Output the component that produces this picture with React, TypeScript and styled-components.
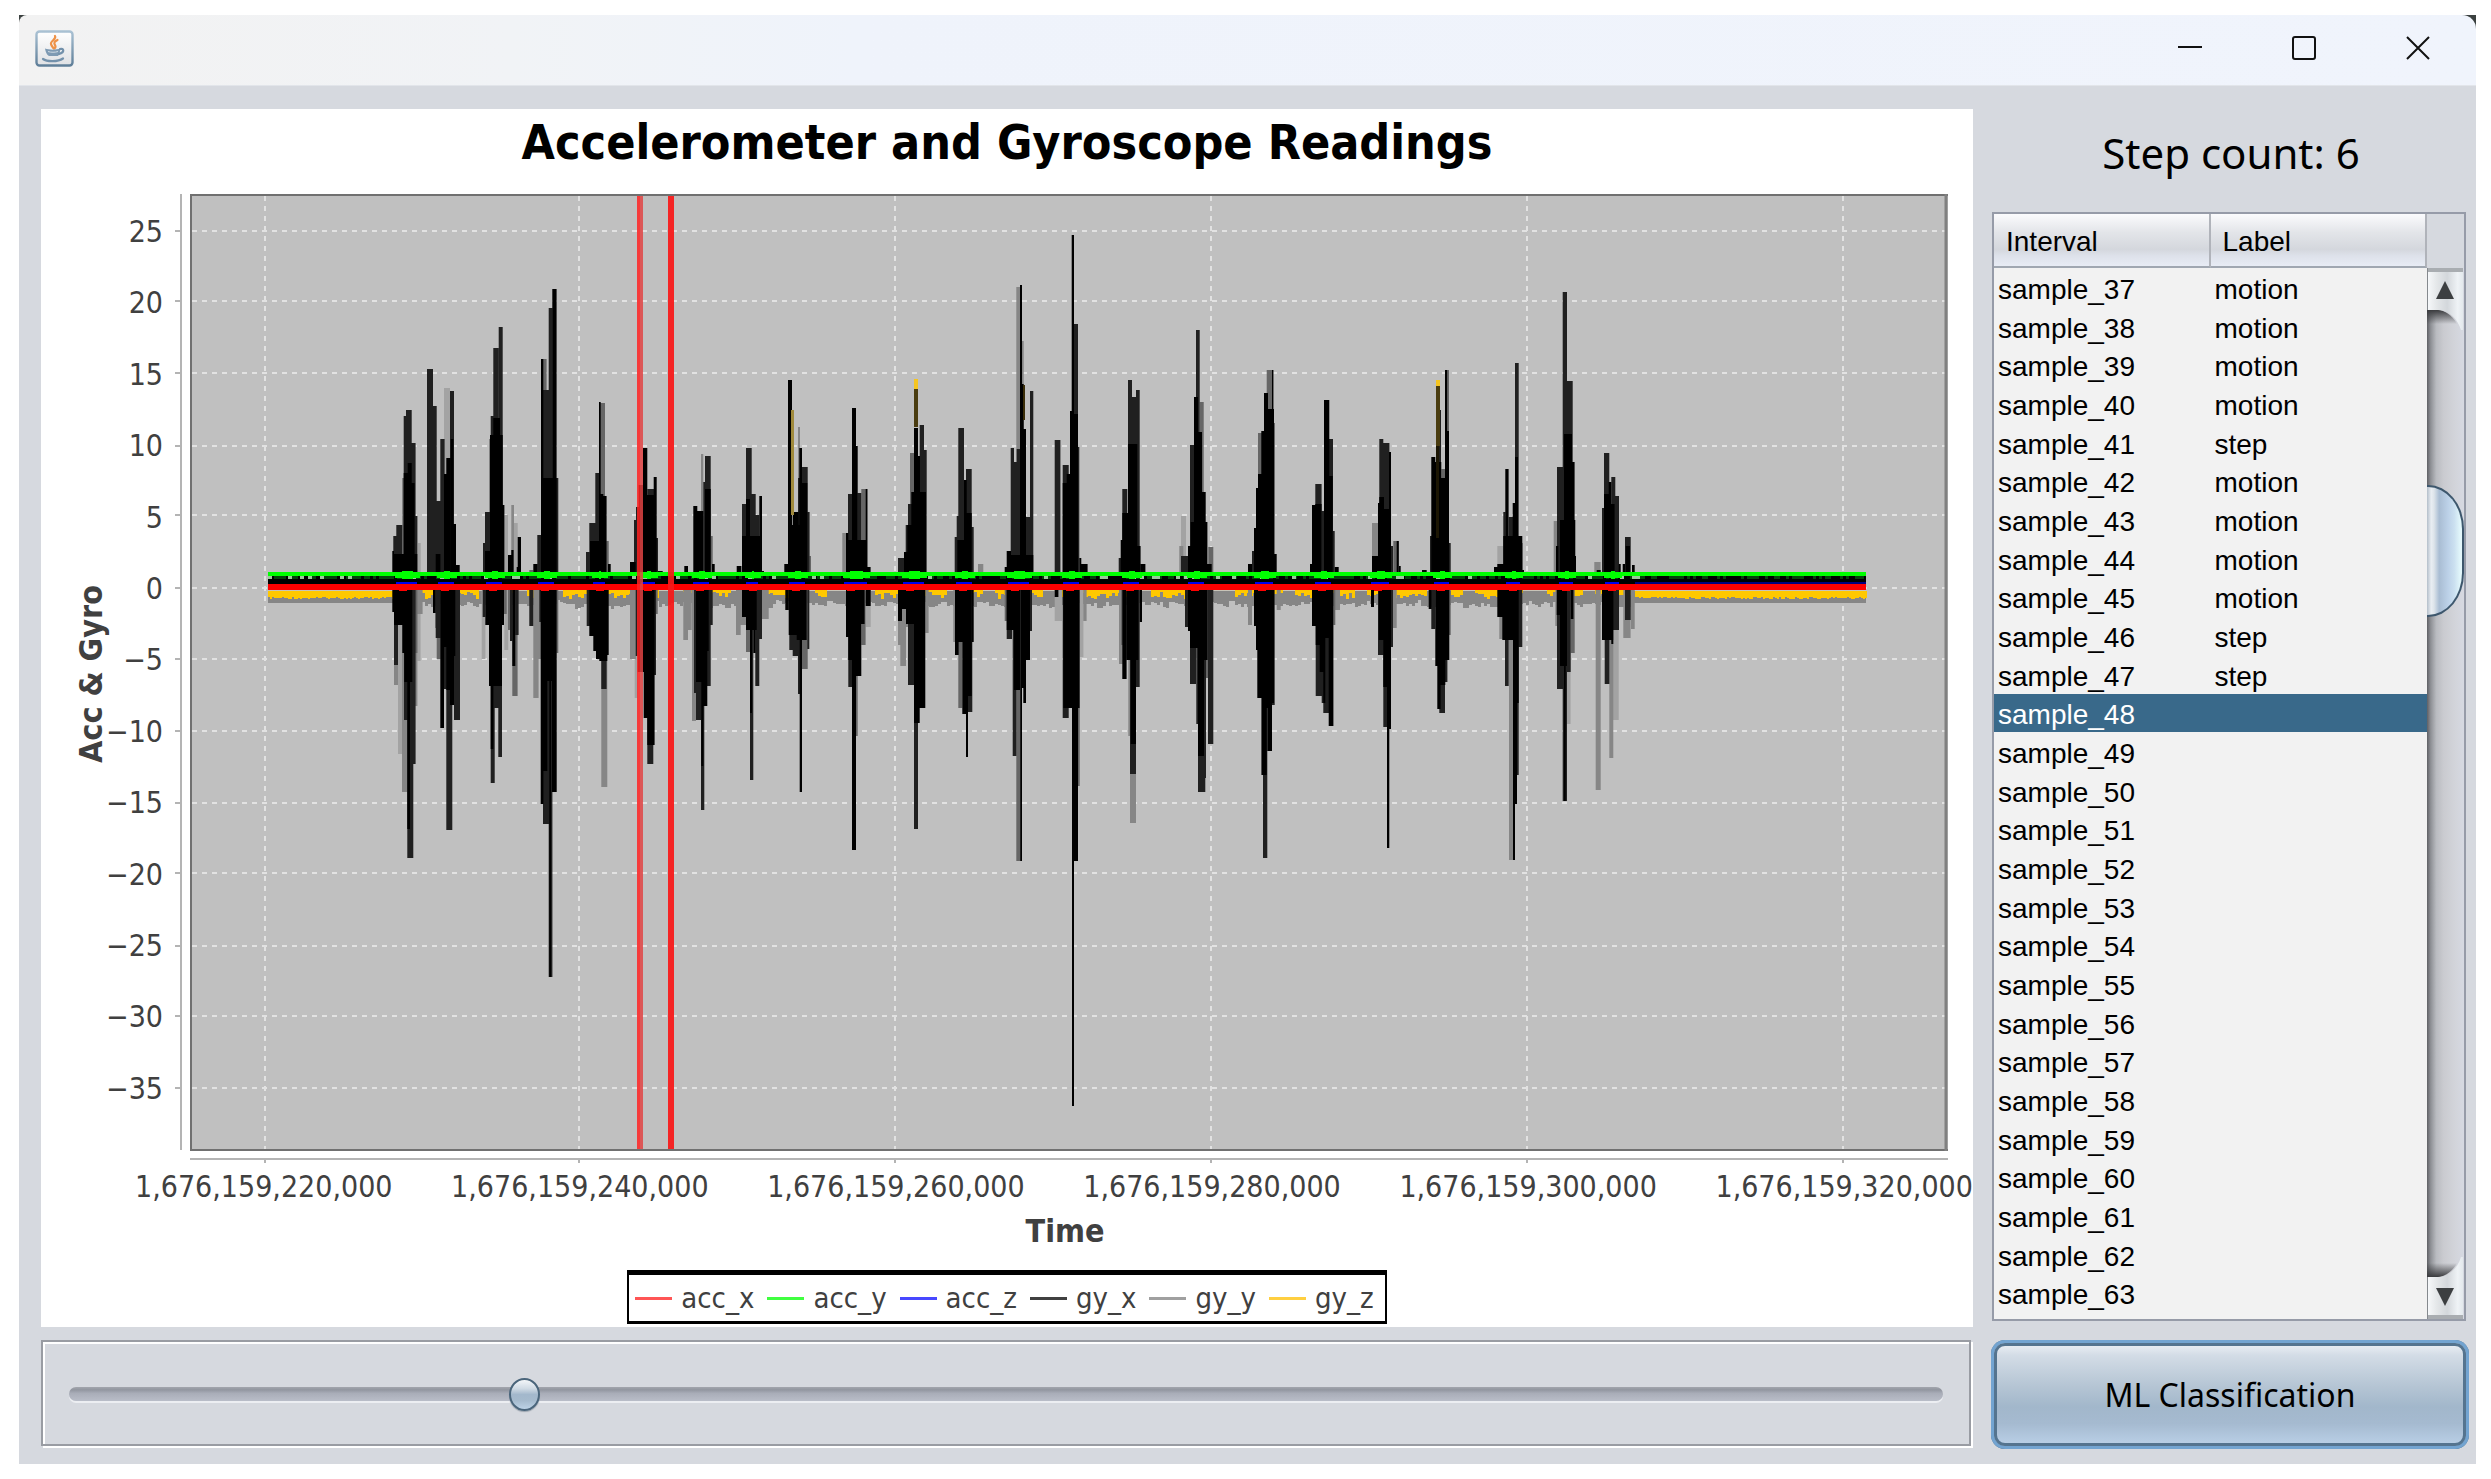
import React, { useState } from 'react';
import styled, { createGlobalStyle } from 'styled-components';

const chartFont = '"DejaVu Sans Condensed", "DejaVu Sans", sans-serif';
const labelFont = '"Noto Sans", "Open Sans", sans-serif';
const tableFont = '"Liberation Sans", Arial, sans-serif';

const GlobalStyle = createGlobalStyle`
  * { box-sizing: border-box; }
  body { margin: 0; background: #fff; color: #000; font-family: ${labelFont}; }
  button { font: inherit; color: inherit; padding: 0; border: 0; background: none; }
`;

/* ---------- window ---------- */

const Page = styled.div`
  display: flex;
  min-height: 100vh;
  padding: 15px;
  padding-left: 19px;
`;

const Window = styled.main`
  display: flex;
  flex: 1;
  flex-direction: column;
  min-width: 0;
  background: linear-gradient(#3b4140 30px, #d6d9df 30px);
`;

const TitleBar = styled.header`
  display: flex;
  align-items: center;
  justify-content: space-between;
  height: 71px;
  padding: 0 32px 4px 16px;
  border-bottom: 1px solid #e2e5ea;
  border-radius: 8px 14px 0 0;
  background: linear-gradient(90deg, #f2f2f2, #f1f3f6 20%, #eff3fb 34%, #f0f4fc);
`;

const WindowButtons = styled.div`
  display: flex;
  gap: 62px;
`;

const WindowButton = styled.button`
  display: grid;
  place-items: center;
  width: 52px;
  height: 40px;

  svg { display: block; }
`;

const Content = styled.div`
  display: grid;
  flex: 1;
  grid-template-columns: minmax(0, 1fr) 478px;
  gap: 18px;
  padding: 23px 7px 15px 22px;
`;

const Column = styled.section`
  display: flex;
  flex-direction: column;
  min-width: 0;
`;

/* ---------- chart ---------- */

const ChartPanel = styled.figure`
  display: flex;
  flex: 1;
  flex-direction: column;
  margin: 0 0 13px;
  background: #fff;
  color: #404040;
  font: 30px/36px ${chartFont};
`;

const ChartTitle = styled.h1`
  margin: 0;
  padding-bottom: 18px;
  color: #000;
  font: bold 48px/67px ${chartFont};
  text-align: center;
`;

const PlotRow = styled.div`
  display: grid;
  flex: 1;
  grid-template-columns: 72px 50px minmax(0, 1fr);
  padding-right: 25px;
`;

const ValueAxisLabel = styled.div`
  display: flex;
  align-items: center;
  justify-content: center;
  padding-bottom: 16px;
  padding-left: 28px;

  span {
    font: bold 32px/40px ${chartFont};
    writing-mode: vertical-rl;
    transform: rotate(180deg);
  }
`;

const ValueTicks = styled.ol`
  display: flex;
  flex-direction: column;
  align-items: flex-end;
  justify-content: space-between;
  margin: 0;
  padding: 20px 0 63px;
  list-style: none;
`;

const Plot = styled.svg`
  display: block;
  width: 100%;
  height: 100%;
  min-height: 0;
`;

const TimeTicks = styled.ol`
  display: flex;
  justify-content: space-between;
  margin: 0;
  padding: 0 0 0 94px;
  line-height: 34px;
  list-style: none;
`;

const TimeAxisLabel = styled.div`
  padding: 6px 0 18px 116px;
  font: bold 32px/42px ${chartFont};
  text-align: center;
`;

const Legend = styled.ul`
  display: flex;
  align-items: center;
  align-self: center;
  gap: 13px;
  height: 54px;
  margin: 0 0 3px;
  padding: 0 11px 0 6px;
  border: solid #000;
  border-width: 5px 2px 3px;
  font-size: 29px;
  list-style: none;
`;

const LegendItem = styled.li<{ $color: string }>`
  display: flex;
  align-items: center;
  gap: 9px;

  &::before {
    width: 37px;
    height: 3px;
    background: ${(p) => p.$color};
    content: '';
  }
`;

/* ---------- position slider ---------- */

const SliderPanel = styled.div`
  display: flex;
  align-items: center;
  height: 106px;
  margin: 0 2px 3px 0;
  padding: 1px 26px 0;
  border: 2px solid #999ca3;
  box-shadow: inset 2px 2px 0 #fff, 2px 2px 0 #fff;
`;

const Slider = styled.input`
  width: 100%;
  height: 34px;
  margin: 0;
  appearance: none;
  background: none;

  &::-webkit-slider-runnable-track {
    height: 14px;
    border-radius: 7px;
    background: linear-gradient(#a3a6ad, #9296a0 20%, #a9adb8 45%, #b9bdc8);
    box-shadow: 0 2px 0 #eceef2;
  }

  &::-webkit-slider-thumb {
    width: 31px;
    height: 33px;
    margin-top: -9px;
    border: 2px solid #4a657b;
    border-radius: 50%;
    appearance: none;
    background: linear-gradient(#f3f6f9, #cfdae4 30%, #a3b8cc 50%, #a5bacd 70%, #bcd2e6);
    box-shadow: 0 1px 1px #9aa3ae;
  }
`;

/* ---------- interval table ---------- */

const StepCount = styled.output`
  display: block;
  height: 103px;
  padding-right: 6px;
  padding-left: 8px;
  font-size: 42px;
  line-height: 88px;
  text-align: center;
`;

const TablePane = styled.div`
  display: grid;
  flex: 1;
  grid-template-columns: minmax(0, 1fr) 37px;
  margin: 0 3px 19px 1px;
  border: 2px solid #969ba8;
`;

const TableViewport = styled.div`
  background: #f2f2f2;
`;

const Table = styled.table`
  width: 100%;
  border-collapse: separate;
  border-spacing: 0;
  font: 28px/36px ${tableFont};
  table-layout: fixed;
`;

const HeadCell = styled.th`
  height: 54px;
  padding: 4px 12px 0;
  border-right: 2px solid #b0b3ba;
  border-bottom: 2px solid #a0a7b1;
  background: linear-gradient(#fbfbfd, #e3e5e9 35%, #d4d7dd 68%, #dde1ea 80%, #e8ecf5);
  font-weight: normal;
  text-align: left;
`;

const Row = styled.tr<{ $selected: boolean }>`
  height: 39px;
  background: ${(p) => (p.$selected ? '#39698a' : 'transparent')};
  color: ${(p) => (p.$selected ? '#fff' : '#000')};

  &:nth-child(3n) { height: 38px; }
`;

const Cell = styled.td`
  padding: 4px 4px 0;
  line-height: 34px;
`;

const ScrollColumn = styled.div`
  display: flex;
  flex-direction: column;
  padding-top: 54px;
`;

const ScrollBar = styled.div`
  display: flex;
  flex: 1;
  flex-direction: column;
  background: linear-gradient(90deg, #5f6065, #8e9095 10%, #b9bbc0 25%, #cacbd0 45%, #d2d4da 75%, #d6d9e2);
`;

const ScrollButton = styled.button`
  display: block;
  height: 62px;

  svg { display: block; }
`;

const ScrollGap = styled.div<{ $grow: number }>`
  flex: ${(p) => p.$grow} 0 0;
`;

const ScrollThumb = styled.div`
  height: 132px;
  border: 2px solid #3d576d;
  border-left: 0;
  border-radius: 0 36px 36px 0 / 0 44px 44px 0;
  background: linear-gradient(90deg, #b4bfca, #e9eef3 12%, #dde4ea 20%, #a9bdd3 35%, #bcd1e8 60%, #cbe0f0 78%, #e2f7fb 95%);
`;

const ClassifyButton = styled.button`
  height: 109px;
  border: 3px solid #55748f;
  border-bottom-color: #3f5b73;
  border-radius: 14px;
  outline: 3px solid #73a4d1;
  outline-offset: -3px;
  background: linear-gradient(#eef1f6, #d3dce6 12%, #b5c5d4 42%, #a2b7cb 62%, #a5bad0 78%, #bbd1e8);
  box-shadow: inset 0 0 0 3px #55748f;
  font-size: 32px;
`;

/* ---------- data ---------- */

const valueTicks = ['25', '20', '15', '10', '5', '0', '−5', '−10', '−15', '−20', '−25', '−30', '−35'];
const timeTicks = ['220', '240', '260', '280', '300', '320'].map((k) => `1,676,159,${k},000`);

const series = [
  { name: 'acc_x', color: '#ff5555' },
  { name: 'acc_y', color: '#40ff40' },
  { name: 'acc_z', color: '#4848ff' },
  { name: 'gy_x', color: '#404040' },
  { name: 'gy_y', color: '#a0a0a0' },
  { name: 'gy_z', color: '#ffcf40' },
];

const labels: Record<number, string> = {
  37: 'motion', 38: 'motion', 39: 'motion', 40: 'motion', 41: 'step', 42: 'motion',
  43: 'motion', 44: 'motion', 45: 'motion', 46: 'step', 47: 'step',
};
const samples = Array.from({ length: 27 }, (_, i) => ({
  id: 37 + i,
  name: `sample_${37 + i}`,
  label: labels[37 + i] ?? '',
}));

/* Each bar is [left, right, tip, shade]; it runs from the recording's base line to its tip. */
type Bar = [number, number, number, number];
type Recording = { x: number; scaleY: number; base: number; bars: Bar[] };

const recordings: Recording[] = [
  {
    x: 370, scaleY: 1.912, base: 770,
    bars: [
      [67, 72, 710, 0], [70, 79, 680, 1], [79, 97, 660, 1], [97, 103, 570, 2], [101, 109, 451, 1], [108, 125, 440, 1],
      [113, 125, 542, 0], [124, 137, 503, 1], [124, 134, 580, 0], [101, 113, 560, 0], [134, 142, 643, 1], [144, 152, 695, 4],
      [67, 142, 715, 0], [67, 73, 826, 0], [72, 84, 927, 1], [72, 84, 965, 3], [84, 98, 1098, 4], [96, 112, 1170, 3],
      [72, 97, 850, 0], [97, 103, 905, 0], [102, 112, 1032, 1], [112, 130, 1297, 1], [112, 120, 1240, 0], [127, 137, 1117, 1],
      [134, 142, 1005, 3], [142, 152, 920, 4], [134, 142, 905, 2], [142, 158, 830, 3], [103, 127, 960, 0],
      [171, 189, 362, 1], [189, 200, 433, 1], [197, 212, 614, 1], [211, 224, 496, 1], [222, 240, 397, 4], [222, 230, 562, 0],
      [229, 242, 532, 0], [240, 252, 403, 1], [242, 250, 495, 0], [250, 258, 657, 0], [258, 269, 737, 0], [197, 211, 716, 0],
      [189, 197, 828, 0], [196, 203, 856, 2], [200, 212, 916, 2], [197, 212, 875, 1], [211, 222, 1048, 0], [222, 229, 973, 1],
      [222, 230, 893, 0], [229, 247, 1242, 1], [229, 240, 975, 0], [240, 252, 1003, 0], [252, 270, 1032, 1], [252, 256, 910, 0],
      [339, 346, 695, 1], [345, 362, 634, 1], [358, 365, 495, 2], [362, 372, 451, 1], [370, 386, 322, 1], [370, 390, 455, 0],
      [386, 398, 282, 1], [398, 403, 622, 0], [360, 398, 488, 0], [345, 362, 710, 0], [335, 346, 916, 4], [338, 346, 835, 1],
      [346, 357, 850, 0], [357, 366, 967, 0], [362, 374, 1153, 1], [362, 370, 1087, 0], [374, 386, 1010, 1], [366, 396, 967, 0],
      [385, 396, 1103, 1], [396, 402, 850, 0], [403, 415, 898, 4], [402, 410, 830, 2],
      [403, 414, 640, 4], [414, 425, 717, 0], [424, 432, 622, 3], [424, 431, 708, 0], [432, 443, 655, 4], [443, 453, 682, 0],
      [440, 450, 740, 0], [414, 420, 860, 2], [420, 427, 882, 1], [427, 443, 987, 2], [427, 436, 930, 0], [436, 446, 870, 1],
      [478, 490, 745, 2], [490, 503, 735, 0], [502, 514, 678, 1], [513, 520, 343, 0], [517, 530, 343, 2], [517, 537, 402, 1],
      [536, 548, 245, 1], [547, 560, 208, 0], [513, 560, 570, 0], [558, 565, 570, 1], [478, 490, 853, 1], [490, 506, 990, 3],
      [503, 514, 915, 3], [508, 514, 845, 1], [512, 520, 1193, 0], [519, 537, 1232, 1], [519, 532, 1130, 0], [536, 547, 1523, 1],
      [538, 543, 1523, 0], [546, 560, 1170, 0], [559, 565, 905, 2], [532, 560, 958, 0],
      [648, 660, 712, 1], [658, 678, 656, 1], [676, 688, 560, 1], [687, 692, 424, 0], [690, 705, 426, 2], [690, 700, 600, 0],
      [700, 710, 604, 0], [710, 716, 690, 2], [714, 722, 735, 0], [660, 710, 690, 0], [650, 660, 852, 1], [658, 672, 872, 0],
      [670, 680, 900, 0], [678, 688, 916, 0], [687, 693, 888, 0], [694, 712, 1160, 3], [694, 710, 973, 1], [688, 712, 920, 0],
      [710, 716, 908, 0],
      [780, 797, 730, 0], [792, 803, 650, 1], [798, 808, 626, 1], [806, 821, 583, 0], [819, 832, 512, 0], [832, 853, 590, 1],
      [832, 852, 603, 0], [851, 860, 567, 0], [858, 864, 685, 1], [864, 878, 748, 0], [780, 798, 915, 3], [794, 803, 990, 4],
      [797, 808, 910, 1], [803, 822, 940, 0], [821, 832, 1028, 0], [832, 850, 1117, 1], [832, 854, 1080, 0], [848, 858, 946, 1],
      [858, 863, 830, 2],
      [943, 954, 738, 0], [970, 982, 624, 0], [980, 1000, 632, 0], [993, 1000, 523, 3], [1000, 1008, 577, 1], [1005, 1022, 527, 1],
      [1005, 1022, 590, 0], [1022, 1028, 680, 2], [1026, 1034, 735, 0], [940, 954, 880, 3], [954, 965, 860, 3],
      [966, 978, 1035, 3], [972, 980, 980, 1], [978, 996, 1032, 1], [978, 994, 960, 0], [993, 1003, 1204, 1], [994, 1000, 1120, 0],
      [1000, 1012, 1005, 0], [1010, 1022, 967, 1], [1010, 1016, 900, 0], [1022, 1028, 850, 1],
      [1100, 1114, 738, 0], [1116, 1130, 620, 1], [1128, 1145, 512, 1], [1128, 1140, 610, 0], [1145, 1157, 600, 1],
      [1155, 1168, 640, 1], [1168, 1176, 604, 0], [1176, 1182, 748, 0], [1116, 1176, 680, 0], [1098, 1112, 870, 3],
      [1112, 1128, 850, 3], [1116, 1128, 835, 0], [1128, 1140, 902, 2], [1140, 1150, 1148, 1], [1140, 1146, 1020, 0],
      [1150, 1157, 905, 0], [1156, 1168, 967, 1], [1128, 1160, 860, 0], [1165, 1176, 878, 1], [1176, 1196, 840, 3],
      [1243, 1256, 735, 0], [1254, 1266, 383, 0], [1268, 1286, 634, 0], [1284, 1292, 570, 1], [1284, 1290, 473, 3],
      [1288, 1296, 513, 0], [1296, 1313, 548, 1], [1296, 1312, 580, 0], [1312, 1319, 634, 1], [1318, 1323, 718, 2],
      [1260, 1290, 660, 0], [1246, 1256, 822, 0], [1258, 1271, 898, 1], [1268, 1284, 910, 1], [1256, 1280, 870, 0],
      [1284, 1292, 983, 1], [1289, 1296, 1170, 0], [1296, 1313, 935, 2], [1280, 1310, 880, 0], [1312, 1318, 896, 1],
    ],
  },
  {
    x: 820, scaleY: 1.668, base: 670,
    bars: [
      [67, 78, 588, 3], [78, 85, 588, 0], [84, 96, 523, 1], [96, 108, 381, 0], [107, 113, 443, 0], [112, 124, 522, 1],
      [124, 142, 515, 2], [137, 142, 515, 0], [142, 152, 645, 0], [78, 142, 600, 0], [78, 88, 762, 0], [85, 97, 845, 1],
      [85, 110, 800, 0], [96, 108, 1118, 0], [108, 113, 927, 2], [108, 124, 828, 0], [124, 137, 775, 2], [124, 134, 740, 0],
      [137, 152, 745, 4], [137, 152, 710, 0],
      [234, 252, 630, 1], [252, 264, 620, 0], [257, 264, 576, 1], [262, 274, 575, 0], [264, 284, 540, 1], [270, 282, 455, 2],
      [282, 294, 414, 0], [293, 300, 460, 0], [299, 312, 408, 1], [311, 320, 450, 1], [274, 318, 520, 0], [234, 242, 775, 3],
      [234, 246, 735, 0], [241, 258, 810, 3], [246, 264, 745, 3], [246, 264, 715, 0], [264, 283, 842, 1], [258, 283, 740, 0],
      [282, 294, 1083, 1], [282, 299, 906, 0], [297, 316, 880, 0], [316, 326, 755, 3],
      [404, 412, 595, 1], [410, 420, 560, 1], [415, 432, 413, 1], [412, 432, 600, 0], [432, 440, 500, 0], [438, 455, 482, 1],
      [438, 455, 556, 0], [455, 461, 578, 1], [474, 490, 640, 3], [400, 410, 770, 3], [405, 416, 793, 0], [415, 427, 880, 2],
      [427, 438, 890, 0], [438, 444, 963, 0], [416, 455, 770, 0], [444, 457, 888, 1], [440, 455, 860, 0], [456, 461, 770, 0],
      [554, 562, 645, 0], [560, 573, 618, 0], [572, 582, 447, 1], [582, 600, 470, 1], [590, 600, 448, 1], [589, 603, 178, 3],
      [600, 606, 175, 0], [606, 611, 340, 0], [606, 618, 416, 0], [615, 631, 562, 1], [630, 640, 352, 1], [573, 640, 625, 0],
      [606, 611, 268, 3], [554, 562, 735, 2], [560, 576, 765, 1], [560, 582, 750, 0], [578, 589, 961, 1], [589, 606, 1136, 2],
      [582, 600, 850, 0], [601, 606, 1136, 0], [606, 612, 848, 0], [610, 618, 873, 0], [618, 630, 800, 0], [630, 636, 752, 1],
      [704, 721, 434, 1], [728, 746, 475, 1], [728, 740, 505, 0], [740, 752, 490, 0], [750, 758, 385, 0], [755, 762, 92, 0],
      [762, 774, 240, 1], [762, 774, 390, 0], [772, 778, 445, 1], [778, 784, 630, 0], [784, 803, 640, 0], [704, 715, 695, 0],
      [704, 726, 735, 4], [728, 746, 898, 1], [730, 757, 880, 0], [756, 762, 1544, 0], [762, 774, 1136, 0], [774, 779, 1010, 2],
      [772, 779, 880, 0], [779, 790, 795, 4], [790, 800, 735, 3],
      [896, 904, 630, 1], [902, 908, 600, 0], [907, 922, 515, 1], [907, 930, 556, 0], [924, 936, 334, 1], [935, 952, 362, 1],
      [924, 952, 440, 0], [948, 959, 350, 1], [952, 962, 610, 0], [962, 976, 640, 0], [897, 908, 808, 3], [903, 912, 775, 2],
      [907, 920, 832, 0], [925, 932, 927, 3], [920, 932, 800, 0], [930, 948, 1072, 3], [930, 948, 990, 1], [932, 948, 940, 0],
      [947, 959, 845, 1], [947, 955, 800, 0], [959, 966, 738, 0],
      [1083, 1098, 560, 4], [1078, 1090, 610, 3], [1083, 1104, 628, 1], [1104, 1112, 610, 0], [1110, 1122, 442, 1],
      [1122, 1134, 362, 0], [1128, 1139, 251, 1], [1139, 1151, 370, 2], [1134, 1146, 420, 0], [1146, 1157, 520, 0],
      [1112, 1162, 570, 0], [1165, 1180, 612, 2], [1160, 1175, 640, 0], [1095, 1104, 745, 1], [1104, 1116, 752, 0],
      [1110, 1128, 841, 1], [1110, 1134, 780, 0], [1129, 1140, 908, 1], [1134, 1156, 1020, 1], [1134, 1152, 960, 0],
      [1150, 1158, 997, 1], [1150, 1163, 800, 0], [1157, 1164, 830, 2], [1164, 1180, 941, 1],
    ],
  },
  {
    x: 1250, scaleY: 1.912, base: 770,
    bars: [
      [-6, 6, 735, 0], [6, 18, 710, 1], [12, 20, 665, 0], [18, 26, 588, 0], [24, 36, 484, 2], [24, 36, 562, 0], [34, 42, 480, 0],
      [42, 54, 408, 0], [50, 70, 364, 2], [66, 70, 364, 0], [50, 72, 437, 0], [70, 75, 465, 2], [72, 80, 715, 0], [-6, 6, 850, 3],
      [12, 18, 853, 0], [18, 24, 898, 0], [22, 36, 990, 0], [34, 40, 1137, 1], [39, 52, 1297, 1], [36, 50, 1137, 0],
      [46, 54, 1010, 0], [52, 66, 1092, 0], [66, 74, 1003, 1], [54, 72, 1000, 0], [80, 92, 822, 3],
      [180, 187, 735, 0], [186, 198, 622, 0], [196, 215, 582, 1], [196, 215, 620, 0], [215, 222, 632, 1], [222, 238, 420, 0],
      [236, 249, 495, 1], [222, 248, 565, 0], [248, 254, 672, 1], [254, 266, 740, 0], [186, 198, 852, 0], [197, 215, 987, 1],
      [197, 209, 890, 0], [215, 222, 1000, 1], [209, 225, 940, 0], [220, 240, 1020, 1], [220, 226, 1000, 0], [236, 250, 1043, 0],
      [200, 248, 875, 0], [250, 256, 850, 2], [254, 270, 822, 3],
      [366, 384, 655, 3], [366, 384, 718, 0], [384, 390, 618, 0], [388, 400, 495, 1], [398, 418, 503, 1], [388, 402, 606, 0],
      [400, 420, 630, 0], [417, 423, 520, 0], [423, 429, 700, 1], [430, 447, 690, 2], [440, 446, 690, 0], [447, 452, 738, 0],
      [363, 372, 817, 0], [384, 402, 908, 1], [386, 400, 880, 0], [400, 418, 1045, 1], [400, 411, 970, 0], [411, 418, 1277, 0],
      [417, 423, 1049, 0], [423, 429, 893, 1], [429, 440, 857, 3],
      [516, 530, 745, 0], [540, 550, 680, 1], [544, 556, 530, 0], [565, 573, 440, 1], [556, 574, 540, 0], [574, 586, 570, 0],
      [574, 586, 552, 2], [585, 592, 364, 0], [592, 597, 364, 2], [590, 597, 480, 0], [596, 602, 695, 1], [565, 592, 570, 0],
      [536, 545, 820, 0], [544, 556, 858, 1], [556, 565, 930, 0], [562, 572, 1012, 0], [568, 585, 1020, 1], [568, 586, 965, 0],
      [584, 592, 960, 1], [586, 598, 918, 0], [597, 602, 870, 2],
      [732, 746, 740, 0], [742, 760, 700, 4], [742, 760, 735, 0], [760, 767, 635, 1], [766, 776, 553, 0], [776, 790, 645, 1],
      [788, 796, 618, 0], [795, 806, 350, 1], [795, 804, 530, 0], [806, 817, 695, 1], [817, 822, 745, 0], [760, 817, 680, 0],
      [742, 757, 835, 0], [748, 760, 878, 3], [757, 766, 880, 0], [765, 776, 967, 1], [766, 790, 880, 0], [777, 790, 1300, 3],
      [789, 795, 1300, 0], [795, 801, 1193, 0], [800, 806, 1137, 1], [795, 806, 1000, 0], [804, 817, 892, 1],
      [911, 922, 652, 3], [918, 925, 700, 0], [921, 940, 548, 1], [938, 951, 215, 1], [950, 968, 385, 1], [942, 966, 486, 0],
      [964, 974, 540, 0], [930, 976, 650, 0], [974, 978, 718, 0], [916, 922, 852, 3], [920, 933, 832, 0], [921, 938, 973, 1],
      [938, 951, 1187, 1], [942, 947, 1187, 0], [948, 962, 940, 1], [946, 962, 1040, 4], [962, 974, 905, 2], [962, 970, 840, 0],
      [930, 951, 930, 0],
      [1033, 1052, 730, 3], [1040, 1052, 745, 0], [1056, 1064, 627, 1], [1062, 1078, 522, 1], [1062, 1076, 600, 0],
      [1076, 1084, 577, 0], [1084, 1096, 568, 1], [1084, 1094, 620, 0], [1094, 1107, 604, 1], [1106, 1112, 735, 0],
      [1118, 1125, 735, 0], [1125, 1142, 683, 1], [1127, 1140, 700, 0], [1146, 1154, 736, 0], [1037, 1052, 1167, 3],
      [1056, 1066, 880, 0], [1064, 1078, 964, 1], [1064, 1090, 880, 0], [1078, 1090, 1105, 3], [1085, 1106, 1032, 4],
      [1084, 1090, 888, 0], [1088, 1107, 860, 1], [1120, 1142, 876, 3], [1125, 1142, 842, 1], [1143, 1154, 858, 3],
    ],
  },
];

const shades = ['#000', '#202020', '#666', '#868686', '#a3a3a3'];

/* gyro z peaks that show through: [x, y, width, height, colour] */
const goldPeaks: [number, number, number, number, string][] = [
  [791, 410, 3, 105, '#a08a3c'], [914, 379, 4, 10, '#f5c520'], [914, 389, 4, 38, '#4a3c10'],
  [1023, 385, 2, 35, '#3a2d08'], [1436, 380, 4, 6, '#f5c520'], [1436, 386, 4, 60, '#4a3c10'], [1436, 446, 3, 92, '#1c1604'],
];

/* left and right edge of every burst of movement */
const bursts: [number, number][] = [
  [395, 420], [437, 457], [485, 505], [537, 557], [592, 608], [640, 658], [692, 712], [745, 761], [788, 808], [843, 870],
  [902, 927], [955, 975], [1007, 1032], [1062, 1082], [1122, 1142], [1187, 1207], [1254, 1276], [1314, 1334], [1370, 1392],
  [1433, 1452], [1505, 1523], [1558, 1576], [1604, 1622],
];

const yTickLines = [231, 301, 373, 446, 515, 588, 659, 731, 803, 873, 946, 1016, 1088];
const xTickLines = [265, 579, 895, 1211, 1527, 1843];

const noise = (n: number) => {
  const v = Math.sin(n * 12.9898) * 43758.5453;
  return v - Math.floor(v);
};
const range = (from: number, to: number, step: number) =>
  Array.from({ length: Math.ceil((to - from) / step) }, (_, i) => from + i * step);

const box = (x: number, y: number, w: number, h: number) => `M${x} ${y}h${w}v${h}h${-w}z`;

function shadePath(shade: number) {
  return recordings
    .flatMap(({ x, scaleY, base, bars }) =>
      bars
        .filter((b) => b[3] === shade)
        .map(([l, r, tip]) => {
          const top = Math.round(180 + Math.min(tip, base) / scaleY);
          const bottom = Math.round(180 + Math.max(tip, base) / scaleY);
          return box(+(x + l / 3).toFixed(1), top, +((r - l) / 3).toFixed(1), bottom - top);
        }),
    )
    .join('');
}

const restNoise = range(395, 1635, 3).map((x, i) => box(x, 590, 3, 10 + Math.round(noise(i >> 1) * 5 + noise(i * 3) * 4)));
const restGold = range(395, 1635, 3)
  .filter((_, i) => noise((i >> 2) + 90) > 0.42)
  .map((x, i) => box(x, 590, 3, 2 + Math.round(noise(i + 7) * 7)));
const edgeGold = [...range(268, 395, 2), ...range(1635, 1866, 2)].map((x, i) => box(x, 591, 2, 6 + Math.round(noise(i) * 2)));
const greenGrain = range(268, 1866, 3).filter((_, i) => noise(i + 300) > 0.45).map((x) => box(x, 576, 3, 3));
const paleGrain = range(268, 1640, 4).filter((_, i) => noise(i + 700) > 0.82).map((x) => box(x, 576, 4, 3));

function Signals() {
  return (
    <g>
      <path fill="#868686" d={box(268, 590, 127, 13) + box(1635, 590, 231, 13) + restNoise.join('')} />
      <path fill="#c8c4b8" d={box(268, 589, 1598, 2)} />
      <path fill="#ffc800" d={restGold.join('') + edgeGold.join('')} />
      {[4, 3, 2, 1, 0].map((s) => (
        <path key={s} fill={shades[s]} d={shadePath(s)} />
      ))}
      {goldPeaks.map(([x, y, w, h, c]) => (
        <rect key={`${x}-${y}`} x={x} y={y} width={w} height={h} fill={c} />
      ))}
      <path fill="#000" d={box(268, 575, 1598, 11)} />
      <path fill="#05420b" d={greenGrain.join('')} />
      <path fill="#9bc79b" d={paleGrain.join('')} />
      <path fill="#000080" d={box(1635, 582, 231, 3)} />
      <path fill="#0f0" d={box(268, 572, 1598, 4)} />
      {bursts.map(([l, r]) => (
        <g key={l}>
          <path fill="#0f0" d={box(l, 572, r - l, 6) + box(l + 7, 571, r - l - 14, 8)} />
          <path fill="#0000f0" d={box(l + 1, 582, r - l - 4, 3)} />
          <path fill="#f00" d={box(l + 4, 584, 8, 7)} />
        </g>
      ))}
      <path fill="#f00" d={box(268, 584, 1598, 6)} />
    </g>
  );
}

function PlotArea() {
  return (
    <Plot viewBox="163 194 1785 976" preserveAspectRatio="none" role="img" aria-label="Accelerometer and gyroscope signals over time">
      <path fill="#c0c0c0" d={box(190, 194, 1758, 957)} />
      <g stroke="#e2e2e2" strokeWidth="2" strokeDasharray="5 5">
        {yTickLines.map((y) => (
          <path key={y} d={`M192 ${y}H1945`} />
        ))}
        {xTickLines.map((x) => (
          <path key={x} d={`M${x} 196V1149`} />
        ))}
      </g>
      <Signals />
      <path fill="#f81818" fillOpacity="0.93" d={box(668, 195, 6, 954)} />
      <path fill="#ff2222" fillOpacity="0.85" d={box(637, 195, 3, 954)} />
      <path fill="#e04444" fillOpacity="0.85" d={box(640, 195, 3, 954)} />
      <path fill="none" stroke="#707070" strokeWidth="2" d="M1948 195H191V1150H1948" />
      <path fill="none" stroke="#808080" strokeWidth="3" d="M1946 194V1151" />
      <g stroke="#b4b4b4" strokeWidth="2">
        <path d="M181 194V1150M190 1159H1948" />
        {yTickLines.map((y) => (
          <path key={y} d={`M175 ${y}H181`} />
        ))}
        {xTickLines.map((x) => (
          <path key={x} d={`M${x} 1159V1163`} />
        ))}
      </g>
    </Plot>
  );
}

/* ---------- icons ---------- */

const JavaIcon = () => (
  <svg width="39" height="37" viewBox="0 0 39 37" aria-hidden="true">
    <defs>
      <linearGradient id="javaFace" x1="0" y1="0" x2="0" y2="1">
        <stop offset="0" stopColor="#fff" />
        <stop offset="1" stopColor="#dfe1e4" />
      </linearGradient>
      <linearGradient id="javaEdge" x1="0" y1="0" x2="0" y2="1">
        <stop offset="0" stopColor="#a9c1d3" />
        <stop offset="1" stopColor="#5f7f99" />
      </linearGradient>
    </defs>
    <rect x="1.5" y="1.5" width="36" height="34" rx="3" fill="url(#javaFace)" stroke="url(#javaEdge)" strokeWidth="2.4" />
    <path d="M20 6c2 3-5 5-4 8 .4 2 2 3 2.500 4.500M22.500 10c-3 1.500-4 3-2.500 5 1 1.500.5 2.500-.5 3.500" fill="none" stroke="#ee9248" strokeWidth="2.200" strokeLinecap="round" />
    <path d="M10 18.500c4 1.500 11 1.500 15.500 0-.5 4-1 5.500-2.500 7.500H14c-2-1-3.500-4-4-7.500z" fill="#7e9ab3" />
    <path d="M25 19c4-1 5 3-1 5M8 29c4 3 15 3 20-.5" fill="none" stroke="#7391ab" strokeWidth="2.200" strokeLinecap="round" />
    <path d="M13 21.500c3 1 7 1 10 0" stroke="#cfdae4" strokeWidth="1" fill="none" />
  </svg>
);

const ScrollCap = ({ down = false }: { down?: boolean }) => (
  <svg width="37" height="62" viewBox="0 0 37 62" aria-hidden="true">
    <defs>
      <linearGradient id={down ? 'capDown' : 'capUp'}>
        <stop offset="0" stopColor="#f6f8fa" />
        <stop offset=".25" stopColor="#e4e7e9" />
        <stop offset=".55" stopColor="#d3d7db" />
        <stop offset=".85" stopColor="#eff3f6" />
        <stop offset="1" stopColor="#e3e8ec" />
      </linearGradient>
      <linearGradient id={down ? 'hollowDown' : 'hollowUp'} x1="0" y1="0" x2="0" y2="1">
        <stop offset="0" stopColor="#3a3b3e" />
        <stop offset="1" stopColor="#3a3b3e" stopOpacity="0" />
      </linearGradient>
    </defs>
    <g transform={down ? 'translate(0 62) scale(1 -1)' : undefined}>
      <path d="M0 42h13c8 2 14 8 17 14H0z" fill={`url(#${down ? 'hollowDown' : 'hollowUp'})`} />
      <path d="M1 0H36V62H34C31 52 23 42 11 42H1z" fill={`url(#${down ? 'capDown' : 'capUp'})`} />
      <path d="M0 0H36V4H0z" fill="#a9adb1" />
      <path d="M0 0H1V42H0z" fill="#85898e" />
      <path d="M18 13L27 31H9z" fill="#3c3f41" />
    </g>
  </svg>
);

/* ---------- app ---------- */

export default function App() {
  const [position, setPosition] = useState(239);
  const [selected, setSelected] = useState(48);

  return (
    <Page>
      <GlobalStyle />
      <Window>
        <TitleBar>
          <JavaIcon />
          <WindowButtons>
            <WindowButton aria-label="Minimize">
              <svg width="24" height="26" viewBox="0 0 24 26"><path d="M0 12H24" stroke="#111" strokeWidth="2" /></svg>
            </WindowButton>
            <WindowButton aria-label="Maximize">
              <svg width="24" height="24" viewBox="0 0 24 24"><rect x="1" y="1" width="22" height="22" rx="2" fill="none" stroke="#111" strokeWidth="2" /></svg>
            </WindowButton>
            <WindowButton aria-label="Close">
              <svg width="24" height="24" viewBox="0 0 24 24"><path d="M1 1L23 23M23 1L1 23" stroke="#111" strokeWidth="2" /></svg>
            </WindowButton>
          </WindowButtons>
        </TitleBar>
        <Content>
          <Column>
            <ChartPanel>
              <ChartTitle>Accelerometer and Gyroscope Readings</ChartTitle>
              <PlotRow>
                <ValueAxisLabel><span>Acc &amp; Gyro</span></ValueAxisLabel>
                <ValueTicks>
                  {valueTicks.map((t) => <li key={t}>{t}</li>)}
                </ValueTicks>
                <PlotArea />
              </PlotRow>
              <TimeTicks>
                {timeTicks.map((t) => <li key={t}>{t}</li>)}
              </TimeTicks>
              <TimeAxisLabel>Time</TimeAxisLabel>
              <Legend>
                {series.map((s) => <LegendItem key={s.name} $color={s.color}>{s.name}</LegendItem>)}
              </Legend>
            </ChartPanel>
            <SliderPanel>
              <Slider
                type="range"
                min={0}
                max={1000}
                value={position}
                onChange={(e) => setPosition(Number(e.target.value))}
                aria-label="Position"
              />
            </SliderPanel>
          </Column>
          <Column>
            <StepCount>Step count: 6</StepCount>
            <TablePane>
              <TableViewport>
                <Table>
                  <thead>
                    <tr>
                      <HeadCell scope="col">Interval</HeadCell>
                      <HeadCell scope="col">Label</HeadCell>
                    </tr>
                  </thead>
                  <tbody>
                    {samples.map((s) => (
                      <Row key={s.id} $selected={s.id === selected} onClick={() => setSelected(s.id)}>
                        <Cell>{s.name}</Cell>
                        <Cell>{s.label}</Cell>
                      </Row>
                    ))}
                  </tbody>
                </Table>
              </TableViewport>
              <ScrollColumn>
                <ScrollBar>
                  <ScrollButton aria-label="Scroll up"><ScrollCap /></ScrollButton>
                  <ScrollGap $grow={155} />
                  <ScrollThumb />
                  <ScrollGap $grow={642} />
                  <ScrollButton aria-label="Scroll down"><ScrollCap down /></ScrollButton>
                </ScrollBar>
              </ScrollColumn>
            </TablePane>
            <ClassifyButton>ML Classification</ClassifyButton>
          </Column>
        </Content>
      </Window>
    </Page>
  );
}
